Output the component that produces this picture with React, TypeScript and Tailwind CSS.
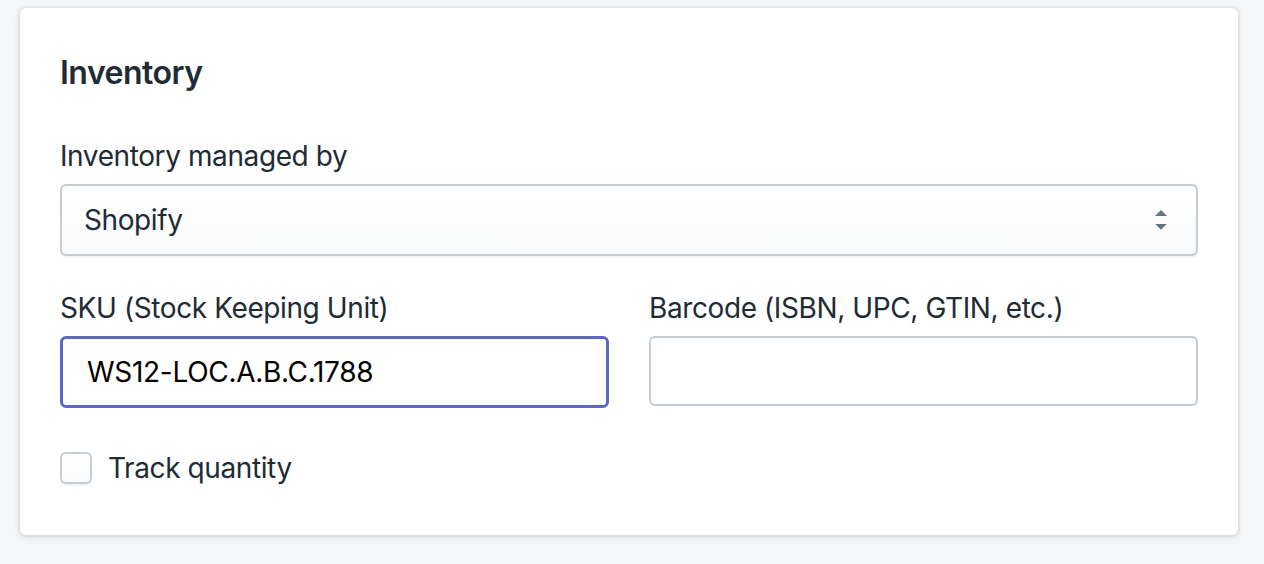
import React from 'react';

function SelectArrows() {
    return (
        <svg viewBox="0 0 20 20" className="h-10 w-10 fill-[#637381]">
            <path d="M13 8l-3-3-3 3h6zm-.1 4L10 14.9 7.1 12h5.8z" />
        </svg>
    );
}

export default function App() {
    return (
        <div
            className="min-h-[564px] w-full bg-[#f4f6f8] pt-2 pl-5 pr-[26px] pb-[29px] text-[#212b36]"
            style={{ fontFamily: 'Inter, "Noto Sans", sans-serif' }}
        >
            <div className="h-[527px] w-[1218px] rounded-[6px] bg-white px-10 pt-[45px] shadow-[0_0_0_2px_rgba(63,63,68,0.05),0_2px_6px_rgba(63,63,68,0.15)]">
                {/* Card title */}
                <h2 className="text-[32px] font-semibold leading-[40px] tracking-[-0.5px]">Inventory</h2>

                {/* Managed by */}
                <div className="mt-[43px]">
                    <label className="mb-2 block text-[28px] leading-[40px] tracking-[-0.4px]">Inventory managed by</label>
                    <div className="flex h-[72px] items-center rounded-[6px] border-2 border-[#c4cdd5] bg-gradient-to-b from-white to-[#f9fafb] pl-[22px] pr-[15px] shadow-[0_2px_0_rgba(22,29,37,0.05)]">
                        <span className="flex-1 text-[28px] leading-[40px] tracking-[-0.4px]">Shopify</span>
                        <SelectArrows />
                    </div>
                </div>

                {/* SKU / Barcode */}
                <div className="mt-8 grid grid-cols-2 gap-10">
                    <div>
                        <label className="mb-2 block text-[28px] leading-[40px] tracking-[-0.4px]">SKU (Stock Keeping Unit)</label>
                        <div className="flex h-[72px] items-center rounded-[6px] border-[3px] border-[#5c6ac4] bg-white pl-[24px]">
                            <span className="text-[28px] leading-[40px] tracking-[-0.3px] text-black">WS12-LOC.A.B.C.1788</span>
                        </div>
                    </div>
                    <div>
                        <label className="mb-2 block text-[28px] leading-[40px] tracking-[-0.4px]">Barcode (ISBN, UPC, GTIN, etc.)</label>
                        <div className="mt-[1px] h-[70px] rounded-[6px] border-2 border-[#c4cdd5] bg-white shadow-[inset_0_2px_0_rgba(99,115,129,0.05)]" />
                    </div>
                </div>

                {/* Track quantity */}
                <div className="mt-[40px] flex items-center gap-4">
                    <div className="h-8 w-8 rounded-[6px] border-2 border-[#c4cdd5] bg-gradient-to-b from-white to-[#f9fafb] shadow-[0_2px_0_rgba(22,29,37,0.05)]" />
                    <span className="text-[28px] leading-[40px] tracking-[-0.4px]">Track quantity</span>
                </div>
            </div>
        </div>
    );
}
